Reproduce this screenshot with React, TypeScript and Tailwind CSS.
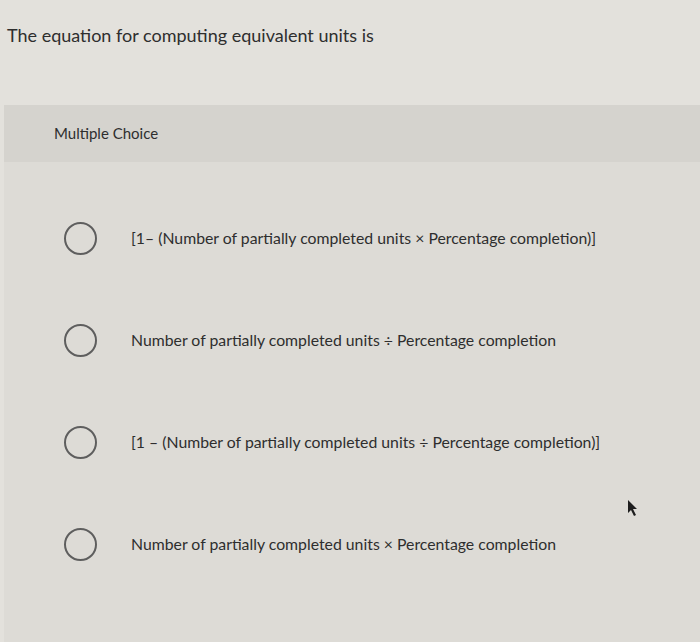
import React from "react";

const options = [
  "[1– (Number of partially completed units × Percentage completion)]",
  "Number of partially completed units ÷ Percentage completion",
  "[1 – (Number of partially completed units ÷ Percentage completion)]",
  "Number of partially completed units × Percentage completion",
];

export default function App() {
  return (
    <div
      className="relative w-[700px] h-[642px] bg-[#e3e1dc] text-[#2e2e2e] overflow-hidden"
      style={{ fontFamily: "Lato, 'Open Sans', sans-serif" }}
    >
      <div className="pt-[24px] pl-[7px] text-[18px] leading-[22px]">
        The equation for computing equivalent units is
      </div>
      <div className="mt-[59px] ml-[4px] h-[540px] bg-[#dddbd6]">
        <div className="h-[57px] bg-[#d5d3ce] flex items-center pl-[50px] text-[15px]">
          Multiple Choice
        </div>
        <div className="pt-[25px]">
          {options.map((o, i) => (
            <div key={i} className="h-[102px] flex items-center">
              <div className="ml-[60px] w-[33px] h-[33px] rounded-full border-2 border-[#5e5e5e] shrink-0" />
              <div className="ml-[34px] text-[15.8px]">{o}</div>
            </div>
          ))}
        </div>
      </div>
      <svg
        className="absolute left-[627px] top-[499px]"
        width="12"
        height="18"
        viewBox="0 0 12 18"
      >
        <path d="M1 1 L1 14 L4 11 L7 17 L9 16 L6 10 L10 10 Z" fill="#1e1e1e" />
      </svg>
    </div>
  );
}
